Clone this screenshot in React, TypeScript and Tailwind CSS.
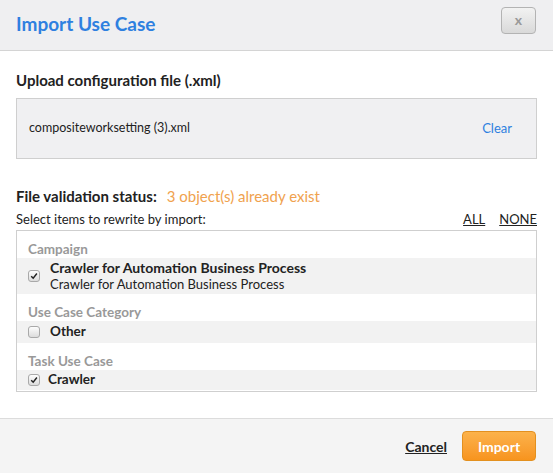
import React from 'react';

const Check: React.FC<{ checked?: boolean }> = ({ checked }) => (
  <span className="flex h-[12px] w-[12px] shrink-0 items-center justify-center rounded-[3px] border border-[#a9a9a9] bg-gradient-to-b from-[#fdfdfd] to-[#dcdcdc]">
    {checked && (
      <svg viewBox="0 0 10 10" className="h-[8px] w-[8px]">
        <path d="M1.5 5.2 L4 7.8 L8.6 1.8" fill="none" stroke="#222" strokeWidth="1.8" />
      </svg>
    )}
  </span>
);

const Group: React.FC<{ title: string; children: React.ReactNode }> = ({ title, children }) => (
  <div>
    <div className="px-[11px] pt-[10px] pb-[1px] text-[13.5px] font-bold leading-[16px] text-[#999]">{title}</div>
    {children}
  </div>
);

export default function App() {
  return (
    <div className="flex h-[473px] w-[553px] flex-col bg-white font-['Lato','Open_Sans',sans-serif] text-[#222]">
      <div className="flex h-[51px] items-start justify-between border-b border-[#d4d4d4] bg-[#efeff1] pl-[16px] pr-[17px]">
        <h1 className="mt-[11px] text-[19px] font-bold leading-[26px] text-[#2e80e0]">Import Use Case</h1>
        <button className="mt-[7px] flex h-[27px] w-[35px] items-center justify-center rounded-[4px] border border-[#b3b3b3] bg-gradient-to-b from-[#f2f2f2] to-[#d9d9d9] pb-[2px] text-[14px] font-bold text-[#999]">
          x
        </button>
      </div>

      <div className="flex-1 px-[16px] pt-[19px]">
        <div className="text-[15px] font-bold leading-[20px]">Upload configuration file (.xml)</div>
        <div className="mt-[8px] flex h-[61px] items-center justify-between border border-[#cfcfcf] bg-[#f0f0f2] pl-[12px] pr-[24px] text-[13px]">
          <span className="text-[12.5px]">compositeworksetting (3).xml</span>
          <a href="#" className="text-[#2e80e0]">Clear</a>
        </div>

        <div className="mt-[26px] flex items-baseline gap-[10px]">
          <span className="text-[15px] font-bold">File validation status:</span>
          <span className="text-[15px] text-[#f0a24e]">3 object(s) already exist</span>
        </div>
        <div className="mt-[3px] flex items-center justify-between text-[13px] leading-[17px]">
          <span>Select items to rewrite by import:</span>
          <span className="flex gap-[14px]">
            <a href="#" className="underline">ALL</a>
            <a href="#" className="underline">NONE</a>
          </span>
        </div>

        <div className="mt-[2px] border border-[#cfcfcf] pb-[1px]">
          <Group title="Campaign">
            <div className="flex h-[36px] items-center gap-[10px] bg-[#f2f2f2] px-[11px] text-[13px]">
              <Check checked />
              <div>
                <div className="text-[14px] font-bold leading-[17px]">Crawler for Automation Business Process</div>
                <div className="leading-[16px]">Crawler for Automation Business Process</div>
              </div>
            </div>
          </Group>
          <Group title="Use Case Category">
            <div className="flex h-[22px] items-center gap-[10px] bg-[#f2f2f2] px-[11px] text-[13.5px] font-bold">
              <Check />
              <span>Other</span>
            </div>
          </Group>
          <Group title="Task Use Case">
            <div className="flex h-[20px] items-center gap-[8px] bg-[#f2f2f2] px-[11px] text-[13.5px] font-bold">
              <Check checked />
              <span>Crawler</span>
            </div>
          </Group>
        </div>
      </div>

      <div className="flex h-[55px] items-center justify-end gap-[15px] border-t border-[#dcdcdc] bg-[#f4f4f4] pr-[17px]">
        <a href="#" className="text-[14px] font-bold underline">Cancel</a>
        <button className="h-[30px] w-[74px] rounded-[4px] border border-[#e3901f] bg-gradient-to-b from-[#fcb24a] to-[#f7941d] text-[14px] font-bold text-white">
          Import
        </button>
      </div>
    </div>
  );
}
